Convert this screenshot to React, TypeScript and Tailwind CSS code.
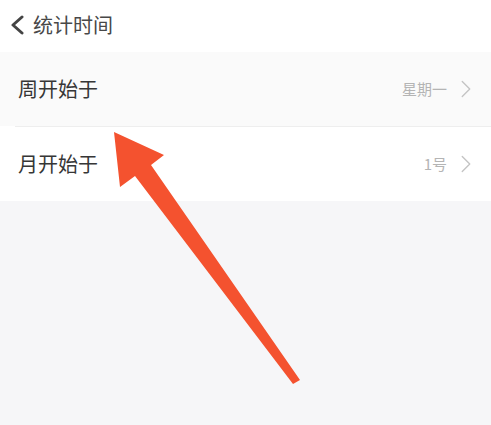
import { ChevronRight } from 'lucide-react'

const font = { fontFamily: '"Noto Sans CJK SC", "Noto Sans", sans-serif' }

function Row({ label, value, className }: { label: string; value: string; className?: string }) {
  return (
    <div className={`flex items-center pl-[18px] pr-[10px] h-[74px] ${className ?? ''}`}>
      <span className="flex-1 text-[20px] text-[#363636]">{label}</span>
      <span className="text-[15px] text-[#b4b4b4] mr-[4px]">{value}</span>
      <ChevronRight className="w-[30px] h-[30px] text-[#c4c4c4]" strokeWidth={1.1} />
    </div>
  )
}

export default function App() {
  return (
    <div className="relative w-[491px] h-[425px] bg-[#f6f6f8] overflow-hidden" style={font}>
      <div className="h-[52px] bg-white flex items-center pl-[10px]">
        <svg width="14" height="20" viewBox="0 0 14 20" className="mt-[-2px]">
          <polyline points="12,2 3,10 12,18" fill="none" stroke="#444444" strokeWidth="3" strokeLinejoin="round" strokeLinecap="round" />
        </svg>
        <span className="ml-[9px] text-[20px] text-[#484848] leading-none mt-[-2px]">统计时间</span>
      </div>
      <Row label="周开始于" value="星期一" className="bg-[#fafafa]" />
      <div className="bg-white pl-[15px]">
        <div className="h-px bg-[#eeeeee]" />
      </div>
      <Row label="月开始于" value="1号" className="bg-white" />

      <svg className="absolute left-0 top-0" width="491" height="425" viewBox="0 0 491 425">
        <polygon
          points="114,132 164,155 151,165 300,380 293,384 135,176 120,187"
          fill="#f4522f"
        />
      </svg>
    </div>
  )
}
